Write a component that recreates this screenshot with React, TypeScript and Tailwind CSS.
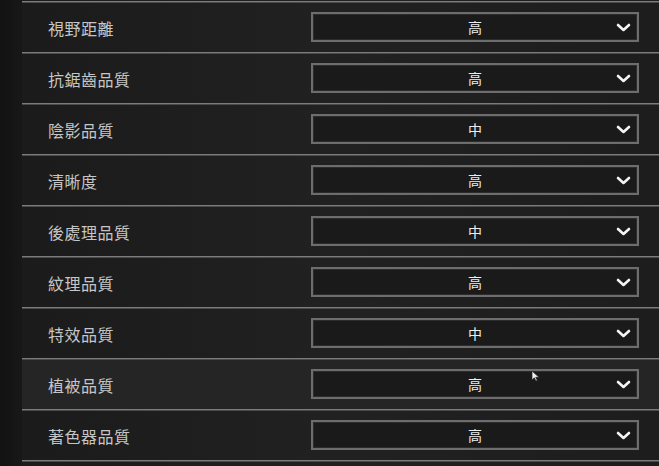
import React from "react";

const rows: { label: string; value: string; hl?: boolean }[] = [
  { label: "視野距離", value: "高" },
  { label: "抗鋸齒品質", value: "高" },
  { label: "陰影品質", value: "中" },
  { label: "清晰度", value: "高" },
  { label: "後處理品質", value: "中" },
  { label: "紋理品質", value: "高" },
  { label: "特效品質", value: "中" },
  { label: "植被品質", value: "高", hl: true },
  { label: "著色器品質", value: "高" },
];

function Chevron() {
  return (
    <svg width="15" height="9" viewBox="0 0 15 9" fill="none">
      <path d="M2 2 L7.5 7 L13 2" stroke="#f4f4f4" strokeWidth="2.6" strokeLinecap="round" strokeLinejoin="round" />
    </svg>
  );
}

function Cursor() {
  return (
    <svg width="9" height="12" viewBox="0 0 9 12" className="absolute left-[531px] top-[370px]">
      <path d="M1 1 L1 10 L3.3 7.8 L5 11 L6.3 10.4 L4.7 7.3 L8 7.3 Z" fill="#f0f0f0" stroke="#222" strokeWidth="0.7" />
    </svg>
  );
}

export default function App() {
  return (
    <div
      className="relative flex h-[466px] w-[659px] overflow-hidden bg-[#151515]"
      style={{ fontFamily: '"Noto Sans CJK TC", "Noto Sans CJK SC", "Noto Sans", sans-serif' }}
    >
      <div className="w-[22px] shrink-0 bg-gradient-to-r from-[#121212] to-[#181818]" />
      <div className="flex flex-1 flex-col bg-gradient-to-r from-[#1b1b1b] via-[#212121] to-[#1d1d1d] pt-[1px]">
        {rows.map((r) => (
          <div
            key={r.label}
            className={`flex h-[51px] shrink-0 items-center border-t border-[#7c7c7c] pl-[26px] pr-[20px] shadow-[inset_0_1px_0_#4a4a4a] ${r.hl ? "bg-[#252525]" : ""}`}
          >
            <div className="flex-1 pt-[1px] text-[16px] leading-none tracking-[0.5px] text-[#c6c6c6]">{r.label}</div>
            <div className="grid h-[30px] w-[328px] grid-cols-[1fr_auto_1fr] items-center border-2 border-[#6d6d6d] bg-[#1a1a1a] shadow-[inset_0_0_0_1px_#2c2c2c]">
              <div />
              <div className="text-[14px] leading-none text-[#ededed]">{r.value}</div>
              <div className="flex justify-end pr-[6px]">
                <Chevron />
              </div>
            </div>
          </div>
        ))}
        <div className="h-[2px] border-t border-[#7c7c7c] shadow-[inset_0_1px_0_#4a4a4a]" />
      </div>
      <Cursor />
    </div>
  );
}
